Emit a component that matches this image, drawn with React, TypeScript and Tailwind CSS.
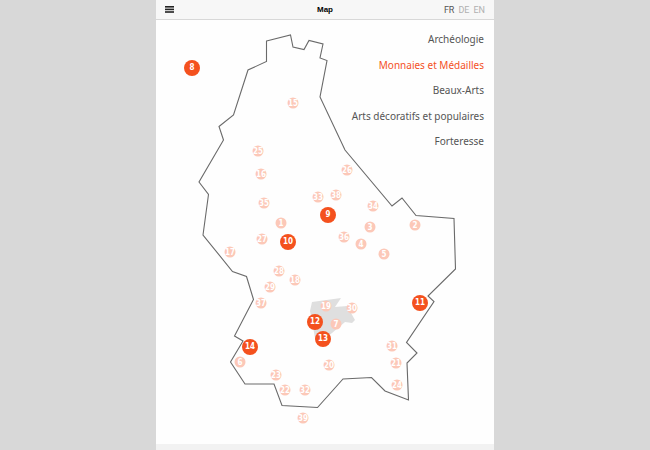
import { useState } from "react";

type Pin = { id: number; x: number; y: number };

// Coordinates are expressed in the units of the map's own 338 x 424 view.
const MAP_WIDTH = 338;
const MAP_HEIGHT = 424;

const minorPins: Pin[] = [
  { id: 15, x: 137, y: 83 },
  { id: 25, x: 102, y: 131 },
  { id: 16, x: 105, y: 154 },
  { id: 35, x: 108, y: 183 },
  { id: 1, x: 125, y: 203 },
  { id: 27, x: 106, y: 219 },
  { id: 17, x: 74, y: 232 },
  { id: 28, x: 123, y: 251 },
  { id: 18, x: 139, y: 260 },
  { id: 29, x: 114, y: 267 },
  { id: 37, x: 105, y: 283 },
  { id: 26, x: 191, y: 150 },
  { id: 33, x: 162, y: 177 },
  { id: 38, x: 180, y: 175 },
  { id: 34, x: 217, y: 186 },
  { id: 3, x: 214, y: 207 },
  { id: 36, x: 188, y: 217 },
  { id: 4, x: 205, y: 224 },
  { id: 5, x: 228, y: 234 },
  { id: 2, x: 259, y: 205 },
  { id: 19, x: 170, y: 286 },
  { id: 30, x: 196, y: 288 },
  { id: 7, x: 180, y: 304 },
  { id: 20, x: 173, y: 345 },
  { id: 31, x: 236, y: 326 },
  { id: 21, x: 240, y: 343 },
  { id: 24, x: 241, y: 365 },
  { id: 6, x: 84, y: 342 },
  { id: 23, x: 120, y: 355 },
  { id: 22, x: 129, y: 370 },
  { id: 32, x: 149, y: 370 },
  { id: 39, x: 147, y: 398 },
];

const majorPins: Pin[] = [
  { id: 8, x: 36, y: 48 },
  { id: 9, x: 172, y: 195 },
  { id: 10, x: 132, y: 222 },
  { id: 11, x: 264, y: 283 },
  { id: 12, x: 159, y: 302 },
  { id: 13, x: 167, y: 319 },
  { id: 14, x: 94, y: 327 },
];

const categories = [
  "Archéologie",
  "Monnaies et Médailles",
  "Beaux-Arts",
  "Arts décoratifs et populaires",
  "Forteresse",
];

const languages = ["FR", "DE", "EN"];

function place(pin: Pin) {
  return {
    left: `${(pin.x / MAP_WIDTH) * 100}%`,
    top: `${(pin.y / MAP_HEIGHT) * 100}%`,
  };
}

function Header() {
  const [language, setLanguage] = useState("FR");
  return (
    <header className="grid h-5 grid-cols-3 items-center border-b border-[#d8d8d8] bg-[#f7f7f7] px-[9px]">
      <button type="button" aria-label="Menu" className="justify-self-start">
        <svg viewBox="0 0 9 7" className="h-[7px] w-[9px] fill-[#222222]" aria-hidden="true">
          <rect y="0" width="9" height="1.6" />
          <rect y="2.6" width="9" height="1.6" />
          <rect y="5.2" width="9" height="1.6" />
        </svg>
      </button>
      <h1 className="text-center font-['Liberation_Sans',sans-serif] text-[8px] leading-4 font-bold text-black">
        Map
      </h1>
      <div className="flex justify-end gap-1 font-['Roboto',sans-serif] text-[9px] leading-4">
        {languages.map((code) => (
          <button
            key={code}
            type="button"
            onClick={() => setLanguage(code)}
            className={code === language ? "text-[#555555]" : "text-[#b0b0b0]"}
          >
            {code}
          </button>
        ))}
      </div>
    </header>
  );
}

function Categories() {
  const [active, setActive] = useState("Monnaies et Médailles");
  return (
    <nav className="absolute top-[11px] right-[10px] flex h-[118px] flex-col items-end justify-between font-['Noto_Sans',sans-serif] text-[10px] leading-4">
      {categories.map((name) => (
        <button
          key={name}
          type="button"
          onClick={() => setActive(name)}
          className={name === active ? "text-[#f4511e]" : "text-[#555555]"}
        >
          {name}
        </button>
      ))}
    </nav>
  );
}

function CountryMap() {
  return (
    <div className="relative aspect-[338/424] w-full font-['DejaVu_Sans_Condensed','DejaVu_Sans',sans-serif]">
      <svg viewBox="0 0 338 424" className="block h-full w-full" aria-hidden="true">
        <polygon
          fill="#dfdfdf"
          points="156,282 185,278 179,287 191,286 199,300 196,303 189,302 176,313 167,320 159,318 154,291"
        />
        <polygon
          fill="none"
          stroke="#6a6a6a"
          strokeWidth="1.1"
          points="110.5,21 134.5,15 137,27 148,29.5 153,20.5 167,24 164,38 171,40.5 164,77 189,130 236,186 246,178 260,195.5 298,198.5 299.5,249 272,276 278,281.5 250.5,322.5 261,333 251,343 252.5,380 229,371 215.5,357.5 187,359 161.5,387.5 126,385.5 118,364 89,364 74.5,342 87,321 78.5,316 97.5,279.5 90.5,256.5 76.5,251.5 47,215 52.5,174.5 43,162 67.5,120 63,106.5 77.5,95 92,50 110.5,41.5"
        />
      </svg>
      {minorPins.map((pin) => (
        <button
          key={pin.id}
          type="button"
          style={place(pin)}
          className="absolute flex size-[11px] -translate-x-1/2 -translate-y-1/2 items-center justify-center rounded-full bg-[#fcc8b8] text-[8px] leading-[11px] font-bold text-white"
        >
          {pin.id}
        </button>
      ))}
      {majorPins.map((pin) => (
        <button
          key={pin.id}
          type="button"
          style={place(pin)}
          className="absolute flex size-4 -translate-x-1/2 -translate-y-1/2 items-center justify-center rounded-full bg-[#f4511e] text-[8px] leading-4 font-bold text-white"
        >
          {pin.id}
        </button>
      ))}
      <Categories />
    </div>
  );
}

export default function App() {
  return (
    <div className="flex min-h-screen justify-center bg-[#d8d8d8]">
      <div className="flex w-[52%] flex-col bg-[#fefefe]">
        <Header />
        <main className="flex-1">
          <CountryMap />
        </main>
        <footer className="h-[6px] bg-[#f2f2f2]" />
      </div>
    </div>
  );
}
